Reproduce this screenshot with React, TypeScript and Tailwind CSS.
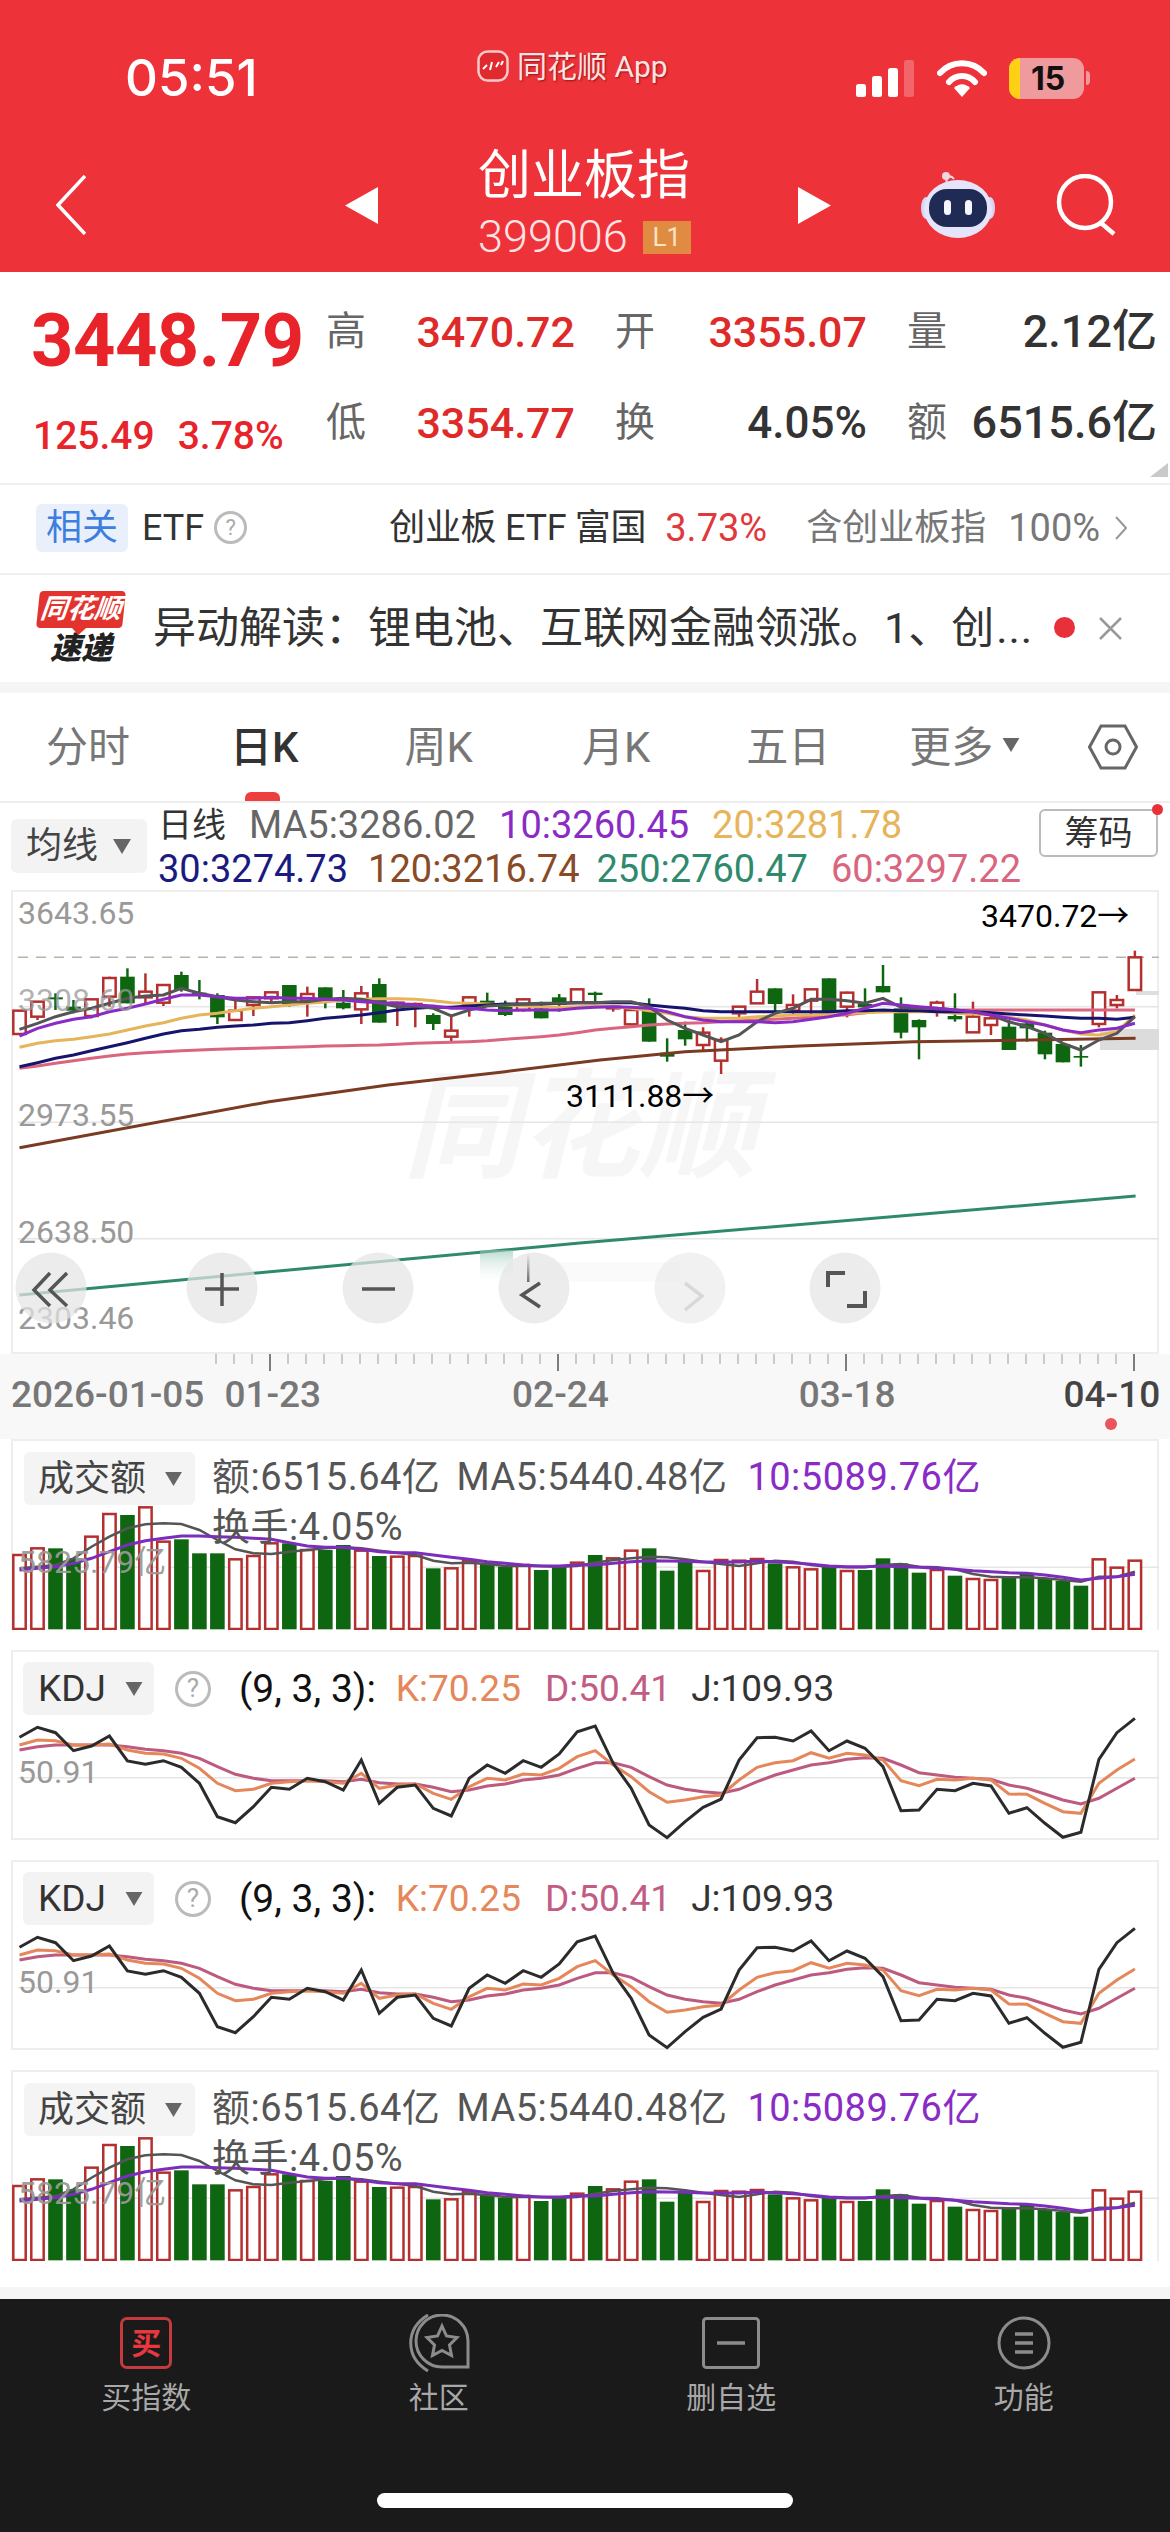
import React from 'react';

// chart data read off the screenshot: y values are in "crop" units, page y = base + v / 3
type Candle = [boolean, number, number, number, number];

const candles: Candle[] = [
  [true, 392, 392, 462, 462], [true, 365, 365, 410, 420], [false, 340, 352, 358, 390], [false, 360, 380, 392, 400],
  [true, 358, 358, 408, 415], [true, 290, 294, 350, 380], [false, 265, 290, 370, 370], [true, 280, 335, 352, 375],
  [true, 315, 315, 368, 378], [false, 275, 285, 330, 335], [false, 300, 338, 345, 358], [false, 340, 345, 412, 432],
  [true, 360, 392, 420, 420], [true, 350, 352, 375, 408], [true, 335, 337, 355, 370], [false, 315, 315, 372, 380],
  [true, 320, 342, 362, 410], [false, 322, 322, 365, 385], [false, 330, 368, 385, 388], [true, 318, 340, 388, 432],
  [false, 295, 312, 428, 428], [true, 365, 368, 372, 438], [true, 368, 372, 378, 442], [false, 400, 405, 432, 450],
  [true, 410, 452, 470, 488], [true, 348, 352, 375, 410], [false, 338, 362, 372, 375], [false, 362, 378, 405, 408],
  [true, 355, 358, 390, 395], [false, 365, 385, 415, 415], [false, 342, 352, 375, 395], [true, 325, 328, 368, 368],
  [false, 335, 338, 345, 368], [true, 375, 380, 385, 395], [true, 385, 390, 433, 437], [false, 355, 385, 485, 485],
  [false, 475, 518, 530, 545], [false, 425, 450, 478, 497], [true, 442, 458, 495, 515], [true, 472, 480, 542, 582],
  [true, 378, 380, 400, 415], [true, 297, 335, 370, 370], [false, 325, 325, 372, 402], [true, 343, 375, 392, 402],
  [true, 325, 328, 362, 402], [false, 295, 295, 395, 395], [true, 335, 338, 380, 412], [false, 325, 372, 382, 385],
  [false, 255, 318, 337, 337], [false, 352, 385, 458, 475], [false, 418, 420, 442, 538], [true, 362, 368, 385, 410],
  [false, 340, 408, 418, 425], [true, 365, 410, 457, 457], [true, 405, 415, 435, 465], [false, 420, 440, 510, 510],
  [false, 420, 430, 445, 485], [false, 452, 458, 523, 538], [false, 490, 492, 547, 547], [false, 495, 528, 533, 560],
  [true, 335, 337, 432, 442], [true, 345, 360, 375, 385], [true, 212, 232, 330, 330],
];

const ma5 = [448, 430, 410, 395, 385, 370, 355, 348, 345, 325, 340, 350, 360, 365, 368, 365, 365, 358, 355, 358, 368, 380, 378, 385, 408, 390, 378, 375, 372, 370, 370, 368, 368, 365, 365, 380, 420, 445, 465, 485, 465, 425, 400, 385, 358, 358, 362, 370, 355, 382, 385, 385, 390, 395, 405, 425, 440, 460, 490, 510, 480, 460, 410];
const ma10 = [468, 445, 430, 418, 410, 395, 385, 372, 358, 345, 345, 350, 355, 355, 352, 355, 355, 358, 360, 365, 368, 370, 375, 378, 385, 385, 390, 392, 390, 390, 390, 385, 382, 380, 382, 385, 395, 410, 420, 425, 425, 425, 428, 425, 418, 410, 400, 385, 370, 375, 380, 385, 390, 395, 405, 415, 425, 435, 450, 458, 450, 445, 430];
const ma20 = [502, 490, 482, 478, 470, 462, 450, 438, 428, 415, 405, 400, 392, 385, 380, 375, 370, 366, 360, 358, 356, 356, 358, 362, 368, 370, 372, 375, 378, 380, 382, 380, 378, 380, 385, 392, 400, 410, 415, 415, 415, 410, 408, 405, 405, 403, 400, 398, 396, 395, 395, 395, 400, 402, 405, 412, 420, 435, 450, 462, 465, 455, 405];
const ma30 = [560, 548, 535, 525, 512, 500, 488, 475, 462, 452, 448, 442, 438, 435, 430, 428, 422, 415, 410, 405, 398, 390, 385, 382, 382, 378, 375, 372, 372, 372, 370, 368, 368, 368, 368, 375, 380, 385, 392, 395, 395, 395, 395, 395, 395, 395, 392, 392, 390, 392, 392, 395, 395, 395, 398, 402, 405, 408, 412, 415, 415, 418, 412];
const ma60 = [565, 558, 550, 542, 535, 528, 522, 518, 515, 512, 510, 508, 506, 505, 503, 502, 500, 498, 497, 496, 495, 493, 490, 488, 487, 485, 482, 478, 474, 470, 465, 458, 450, 445, 440, 435, 432, 430, 428, 425, 422, 420, 418, 415, 412, 408, 404, 398, 392, 392, 392, 390, 390, 390, 390, 390, 390, 390, 390, 390, 390, 390, 390];

const volBars: [boolean, number][] = [
  [true, 375], [true, 355], [false, 355], [false, 385], [true, 320], [true, 252], [false, 255], [true, 232], [true, 335], [false, 328], [false, 370],
  [false, 370], [true, 388], [true, 378], [true, 340], [false, 340], [true, 360], [false, 360], [false, 345], [true, 362], [false, 378], [true, 380],
  [true, 378], [false, 415], [true, 415], [true, 392], [false, 400], [false, 410], [true, 405], [false, 420], [false, 405], [true, 398], [false, 375],
  [true, 385], [true, 362], [false, 355], [false, 422], [false, 395], [true, 423], [true, 390], [true, 392], [true, 387], [false, 400], [true, 412],
  [true, 418], [false, 410], [true, 423], [false, 420], [false, 385], [false, 400], [false, 428], [true, 420], [false, 437], [true, 447], [true, 450],
  [false, 440], [false, 430], [false, 445], [false, 453], [false, 467], [true, 388], [true, 413], [true, 392],
];
const volMa5 = [415, 410, 405, 385, 350, 320, 295, 283, 280, 282, 300, 330, 358, 370, 372, 365, 360, 355, 352, 355, 362, 368, 375, 392, 400, 398, 402, 408, 408, 408, 410, 408, 398, 390, 385, 380, 382, 388, 395, 402, 408, 400, 392, 395, 405, 410, 412, 412, 405, 402, 410, 412, 418, 432, 440, 442, 442, 445, 450, 455, 440, 440, 425];
const volMa10 = [420, 415, 410, 400, 385, 365, 345, 332, 325, 318, 318, 320, 322, 325, 328, 338, 348, 352, 352, 358, 365, 368, 368, 375, 382, 388, 395, 400, 405, 408, 408, 405, 405, 400, 395, 392, 393, 394, 396, 396, 396, 393, 395, 398, 403, 408, 410, 410, 408, 410, 412, 415, 418, 422, 425, 428, 430, 435, 442, 450, 445, 440, 433];

const kdjJ = [922, 892, 908, 962, 948, 918, 993, 1003, 992, 1012, 1060, 1160, 1178, 1130, 1072, 1078, 1045, 1055, 1080, 990, 1120, 1072, 1065, 1135, 1158, 1045, 1005, 1030, 992, 1012, 972, 905, 888, 1000, 1075, 1185, 1223, 1175, 1132, 1107, 990, 923, 922, 933, 903, 962, 933, 955, 1010, 1142, 1140, 1078, 1082, 1060, 1068, 1150, 1133, 1180, 1222, 1207, 988, 908, 865];
const kdjK = [945, 930, 932, 945, 945, 942, 960, 970, 972, 985, 1015, 1060, 1082, 1078, 1060, 1055, 1052, 1055, 1060, 1030, 1075, 1065, 1062, 1090, 1108, 1070, 1045, 1050, 1032, 1035, 1015, 980, 962, 1005, 1040, 1085, 1117, 1110, 1100, 1095, 1050, 1012, 998, 992, 968, 985, 970, 975, 990, 1052, 1067, 1048, 1050, 1045, 1050, 1092, 1093, 1120, 1145, 1150, 1060, 1020, 987];
const kdjD = [960, 950, 945, 945, 945, 945, 950, 958, 962, 970, 985, 1010, 1033, 1045, 1052, 1052, 1052, 1052, 1055, 1048, 1058, 1062, 1062, 1072, 1085, 1080, 1068, 1062, 1050, 1045, 1035, 1015, 998, 998, 1012, 1040, 1065, 1078, 1085, 1090, 1078, 1055, 1035, 1020, 1005, 998, 988, 983, 985, 1005, 1028, 1035, 1042, 1045, 1048, 1065, 1075, 1092, 1110, 1122, 1105, 1075, 1045];

const xAt = (i: number) => 19.5 + i * 17.99;

function linePoints(values: number[], base: number) {
  return values.map((v, i) => `${xAt(i).toFixed(1)},${(base + v / 3).toFixed(1)}`).join(' ');
}

const RED_LINE = '#b3302f';
const GREEN_BAR = '#0f6610';

function MainChart() {
  const y = (v: number) => 880 + v / 3;
  return (
    <svg viewBox="11 890 1148 464" className="absolute -left-[2px] -top-[2px] w-[1148px] h-[464px]">
      <defs>
        <linearGradient id="smudge" x1="0" y1="0" x2="0" y2="1">
          <stop offset="0" stopColor="#8fc4b2" stopOpacity="0.6" />
          <stop offset="1" stopColor="#ffffff" stopOpacity="0" />
        </linearGradient>
        <linearGradient id="ghostLine" x1="0" y1="0" x2="0" y2="1">
          <stop offset="0" stopColor="#555555" stopOpacity="0" />
          <stop offset="1" stopColor="#555555" stopOpacity="0.85" />
        </linearGradient>
      </defs>
      <text x="403" y="1168" fontSize="118" fontWeight="700" fontStyle="italic" fill="#f6f6f6">同花顺</text>
      <line x1="18" x2="1159" y1={y(232)} y2={y(232)} stroke="#b5b5a8" strokeWidth="1.5" strokeDasharray="10 8" />
      {[380, 727, 1076].map((v) => (
        <line key={v} x1="18" x2="1159" y1={y(v)} y2={y(v)} stroke="#e6e6e6" strokeWidth="1.5" />
      ))}
      <rect x="1100" y="1029" width="59" height="21" fill="#dcdcdc" />
      <rect x="1136" y="991" width="23" height="4" fill="#dedede" />
      {candles.map(([up, hi, top, bottom, lo], i) => (
        <g key={i}>
          <line x1={xAt(i)} x2={xAt(i)} y1={y(hi)} y2={y(lo)} stroke={up ? RED_LINE : GREEN_BAR} strokeWidth="2.5" />
          {up ? (
            <rect x={xAt(i) - 6.2} y={y(top)} width="12.4" height={(bottom - top) / 3} fill="#fff" stroke={RED_LINE} strokeWidth="2.5" />
          ) : (
            <rect x={xAt(i) - 7.3} y={y(top)} width="14.6" height={(bottom - top) / 3} fill={GREEN_BAR} />
          )}
        </g>
      ))}
      <polyline points={`19.5,${y(803)} 269,${y(665)} 388,${y(615)} 505,${y(575)} 600,${y(540)} 685,${y(515)} 800,${y(498)} 914,${y(485)} 1029,${y(480)} 1135.6,${y(475)}`} fill="none" stroke="#7b3a22" strokeWidth="3" />
      <polyline points={`19.5,${y(1245)} 577,${y(1090)} 1135.6,${y(948)}`} fill="none" stroke="#2f8a6d" strokeWidth="3" />
      <polyline points={linePoints(ma60, 880)} fill="none" stroke="#d9657e" strokeWidth="3" />
      <polyline points={linePoints(ma20, 880)} fill="none" stroke="#e6b45a" strokeWidth="3" />
      <polyline points={linePoints(ma30, 880)} fill="none" stroke="#16146c" strokeWidth="3" />
      <polyline points={linePoints(ma5, 880)} fill="none" stroke="#555555" strokeWidth="3" />
      <polyline points={linePoints(ma10, 880)} fill="none" stroke="#8a2bc6" strokeWidth="3" />

      <g fontSize="32" fill="#999999">
        <text x="18" y="924">3643.65</text>
        <text x="18" y="1011" fillOpacity="0.75">3308.60</text>
        <text x="18" y="1126">2973.55</text>
        <text x="18" y="1243">2638.50</text>
        <text x="18" y="1329">2303.46</text>
      </g>
      <g fontSize="32" fill="#000000">
        <text x="981" y="927">3470.72→</text>
        <text x="566" y="1107">3111.88→</text>
      </g>

      {/* floating zoom / pan buttons */}
      <rect x="480" y="1250" width="33" height="36" fill="url(#smudge)" />
      <rect x="520" y="1262" width="160" height="20" fill="#fafafa" />
      {[51, 222, 378, 534, 690, 845].map((cx) => (
        <circle key={cx} cx={cx} cy="1288" r="35.5" fill="#e4e4e4" fillOpacity={cx === 690 ? 0.5 : 0.72} />
      ))}
      <rect x="527" y="1254" width="2.5" height="28" fill="url(#ghostLine)" />
      <g fill="none" stroke="#555555" strokeWidth="3.5">
        <path d="M50 1273 L34 1290 L50 1306 M67 1273 L50 1290 L67 1306" />
        <path d="M205 1289 H239 M222 1273 V1306" />
        <path d="M362 1289 H395" />
        <path d="M540 1283 L522 1295 L540 1307" />
        <path d="M828 1287 V1273 H845 M865 1291 V1306 H847" strokeWidth="4" />
      </g>
      <path d="M685 1283 L702 1296 L685 1310" fill="none" stroke="#d8d8d8" strokeWidth="3.5" />
    </svg>
  );
}

function AxisTicks() {
  const ticks = Array.from({ length: 52 }, (_, i) => 216 + i * 18);
  return (
    <svg width="1170" height="18" className="block">
      {ticks.map((x) => {
        const major = x === 270 || x === 558 || x === 846 || x === 1134;
        return <line key={x} x1={x} x2={x} y1="0" y2={major ? 17 : 10} stroke={major ? '#555555' : '#bbbbbb'} strokeWidth="1.5" />;
      })}
    </svg>
  );
}

function VolumeChart({ top }: { top: number }) {
  const base = top - 9;
  const y = (v: number) => base + v / 3;
  return (
    <svg viewBox={`11 ${top} 1148 191`} className="absolute -left-[2px] -top-[2px] w-[1148px] h-[191px]">
      <line x1="18" x2="1159" y1={y(412)} y2={y(412)} stroke="#e6e6e6" strokeWidth="1.5" />
      {volBars.map(([up, t], i) =>
        up ? (
          <rect key={i} x={xAt(i) - 6.2} y={y(t)} width="12.4" height={(597 - t) / 3} fill="#fff" stroke={RED_LINE} strokeWidth="2.5" />
        ) : (
          <rect key={i} x={xAt(i) - 7.3} y={y(t)} width="14.6" height={(598 - t) / 3} fill={GREEN_BAR} />
        ),
      )}
      <polyline points={linePoints(volMa5, base)} fill="none" stroke="#555555" strokeWidth="2.5" />
      <polyline points={linePoints(volMa10, base)} fill="none" stroke="#7c2dbb" strokeWidth="3" />
      <text x="18" y={y(430)} fontSize="32" fill="#999999" fillOpacity="0.95">5825.79亿</text>
    </svg>
  );
}

function KdjChart({ top }: { top: number }) {
  const base = top - 220;
  const y = (v: number) => base + v / 3;
  return (
    <svg viewBox={`11 ${top} 1148 190`} className="absolute -left-[2px] -top-[2px] w-[1148px] h-[190px]">
      <line x1="18" x2="1159" y1={y(1043)} y2={y(1043)} stroke="#e6e6e6" strokeWidth="1.5" />
      <text x="18" y={y(1058)} fontSize="32" fill="#999999">50.91</text>
      <polyline points={linePoints(kdjD, base)} fill="none" stroke="#bd5a80" strokeWidth="3" />
      <polyline points={linePoints(kdjK, base)} fill="none" stroke="#e5875a" strokeWidth="3" />
      <polyline points={linePoints(kdjJ, base)} fill="none" stroke="#2b2b2b" strokeWidth="3" />
    </svg>
  );
}

function Caret({ className }: { className: string }) {
  return (
    <svg viewBox="0 0 18 16" className={className}>
      <path d="M0 1 H18 L9 16 Z" fill="#666666" />
    </svg>
  );
}

function HelpCircle({ className }: { className: string }) {
  return (
    <div className={`rounded-full border-[3px] border-[#bbbbbb] text-[#aaaaaa] flex items-center justify-center ${className}`}>?</div>
  );
}

function VolumePanel({ top }: { top: number }) {
  return (
    <div className="relative h-[191px] border-2 border-b-0 border-[#eeeeee]">
      <VolumeChart top={top} />
      <div className="relative flex items-start pt-[11px] pl-[11px]">
        <div className="flex items-center w-[171px] h-[53px] rounded-md bg-[#f3f3f3]/95 pl-[14px] text-[36px] text-[#444444]">
          成交额
          <Caret className="w-[17px] h-[15px] ml-[19px]" />
        </div>
        <div className="ml-[17px] text-[38px] leading-[50px] text-[#555555] tracking-[0.5px]">
          <div className="flex whitespace-nowrap">
            <span>额:6515.64亿</span>
            <span className="ml-[16px]">MA5:5440.48亿</span>
            <span className="ml-[20px] text-[#8a2bc6]">10:5089.76亿</span>
          </div>
          <div>换手:4.05%</div>
        </div>
      </div>
    </div>
  );
}

function KdjPanel({ top }: { top: number }) {
  return (
    <div className="relative h-[190px] border-2 border-[#eeeeee]">
      <KdjChart top={top} />
      <div className="relative flex items-center pt-[10px] pl-[10px]">
        <div className="flex items-center w-[131px] h-[53px] rounded-md bg-[#f3f3f3] pl-[15px] text-[37px] text-[#333333]">
          KDJ
          <Caret className="w-[18px] h-[15px] ml-[19px]" />
        </div>
        <HelpCircle className="w-[36px] h-[36px] ml-[21px] text-[26px]" />
        <div className="flex ml-[28px] text-[37px] leading-[50px] whitespace-nowrap">
          <span className="text-[#111111] text-[39px]">(9, 3, 3):</span>
          <span className="ml-[20px] text-[#e5875a]">K:70.25</span>
          <span className="ml-[24px] text-[#c25c85]">D:50.41</span>
          <span className="ml-[20px] text-[#333333]">J:109.93</span>
        </div>
      </div>
    </div>
  );
}

function QuoteCell({ label, value, valueClass }: { label: string; value: string; valueClass: string }) {
  return (
    <div className="flex items-center justify-between h-[44px]">
      <span className="text-[40px] text-[#666666]">{label}</span>
      <span className={`font-medium ${valueClass}`}>{value}</span>
    </div>
  );
}

function App() {
  return (
    <div className="relative w-[1170px] h-[2532px] flex flex-col overflow-hidden bg-white [font-family:Roboto,'Noto_Sans_CJK_SC',sans-serif]">
      <header className="h-[272px] bg-[#ee3239] text-white">
        <div className="flex items-center h-[130px] pt-[26px]">
          <span className="ml-[125px] w-[130px] text-[51px] font-medium [font-family:Inter,sans-serif] whitespace-nowrap">05:51</span>
          <div className="flex items-center ml-[222px] w-[192px] -mt-[24px]">
            <svg width="32" height="32" viewBox="0 0 32 32">
              <rect x="1.5" y="1.5" width="29" height="29" rx="9" fill="#e02a2f" stroke="#f8c9c9" strokeWidth="2.5" />
              <path d="M6 19 L10 15 M13 20 L15 12 M19 17 L22 12 M24 15 L26 11" stroke="#ffffff" strokeWidth="2" />
            </svg>
            <span className="ml-[8px] text-[30px] text-[#fbe4e4] whitespace-nowrap [text-shadow:1px_1px_2px_rgba(90,0,0,0.6)]">同花顺 App</span>
          </div>
          <svg width="58" height="37" viewBox="0 0 58 37" className="ml-[187px]">
            <rect x="0" y="24" width="10" height="13" rx="2.5" fill="#fff" />
            <rect x="16" y="16" width="10" height="21" rx="2.5" fill="#fff" />
            <rect x="32" y="8" width="10" height="29" rx="2.5" fill="#fff" />
            <rect x="48" y="0" width="10" height="37" rx="2.5" fill="#ffffff" fillOpacity="0.25" />
          </svg>
          <svg width="50" height="38" viewBox="0 0 50 38" className="ml-[23px]">
            <path d="M3 14 C15 1 35 1 47 14" fill="none" stroke="#fff" strokeWidth="6" strokeLinecap="round" />
            <path d="M12 23 C19 15 31 15 38 23" fill="none" stroke="#fff" strokeWidth="6" strokeLinecap="round" />
            <path d="M17 29 C22 24 28 24 33 29 L25 38 Z" fill="#fff" />
          </svg>
          <div className="flex items-center ml-[22px]">
            <div className="relative flex w-[75px] h-[41px] rounded-[11px] overflow-hidden bg-[#ef9a9c]">
              <div className="w-[11px] bg-[#fdd015]" />
              <span className="flex-1 text-center text-[32px] leading-[41px] font-bold text-[#111111] [font-family:Inter,sans-serif] pr-[8px]">15</span>
            </div>
            <div className="ml-[2px] w-[4px] h-[14px] rounded-r-full bg-[#ef9a9c]" />
          </div>
        </div>
        <div className="flex items-center h-[142px] pt-[8px]">
          <svg width="30" height="60" viewBox="0 0 30 60" className="ml-[56px]">
            <path d="M29 1 L2 30 L29 59" fill="none" stroke="#fff" strokeWidth="3.5" />
          </svg>
          <svg width="33" height="37" viewBox="0 0 33 37" className="ml-[259px]">
            <path d="M33 0 V37 L0 18.5 Z" fill="#fff" />
          </svg>
          <div className="ml-[100px] w-[220px] flex flex-col items-start -mt-[10px]">
            <span className="text-[53px] leading-[60px] whitespace-nowrap">创业板指</span>
            <div className="flex items-center mt-[14px]">
              <span className="text-[45px] leading-[34px] font-light text-[#fde3e3]">399006</span>
              <span className="ml-[15px] w-[48px] h-[33px] flex items-center justify-center bg-[#e08b42] text-[26px] text-[#fbe3c8]">L1</span>
            </div>
          </div>
          <svg width="33" height="37" viewBox="0 0 33 37" className="ml-[100px]">
            <path d="M0 0 V37 L33 18.5 Z" fill="#fff" />
          </svg>
          <svg width="76" height="68" viewBox="0 0 76 68" className="ml-[89px]">
            <path d="M27 12 C25 6 30 3 34 8" fill="none" stroke="#f2dfea" strokeWidth="2" />
            <circle cx="26" cy="5" r="4" fill="#f3d5df" />
            <ellipse cx="6" cy="37" rx="5" ry="11" fill="#d8d6f4" />
            <ellipse cx="70" cy="37" rx="5" ry="11" fill="#d8d6f4" />
            <ellipse cx="38" cy="38" rx="34" ry="29" fill="#e6e4fb" />
            <rect x="9" y="18" width="58" height="38" rx="18" fill="#1f2b55" />
            <rect x="24" y="29" width="7" height="15" rx="3.5" fill="#f6f6ff" />
            <rect x="45" y="29" width="7" height="15" rx="3.5" fill="#f6f6ff" />
          </svg>
          <svg width="62" height="62" viewBox="0 0 62 62" className="ml-[60px]">
            <circle cx="29" cy="28" r="26" fill="none" stroke="#fff" strokeWidth="4.5" />
            <path d="M45 49 L58 60" fill="none" stroke="#fff" strokeWidth="4.5" />
          </svg>
        </div>
      </header>

      <section className="relative h-[213px] border-b-2 border-[#f0f0f0] flex pl-[34px]">
        <div className="w-[292px] flex flex-col text-[#e8232a]">
          <span className="text-[74px] leading-[74px] font-bold mt-[32px] -ml-[3px] tracking-[-0.5px]">3448.79</span>
          <div className="flex text-[39px] leading-[40px] font-medium mt-[38px] -ml-[1px] whitespace-nowrap">
            <span>125.49</span>
            <span className="ml-[23px]">3.78%</span>
          </div>
        </div>
        <div className="grid grid-cols-[249px_252px_250px] gap-x-[40px] gap-y-[47px] h-fit pt-[38px]">
          <QuoteCell label="高" value="3470.72" valueClass="text-[43px] text-[#df2a2a]" />
          <QuoteCell label="开" value="3355.07" valueClass="text-[43px] text-[#df2a2a]" />
          <QuoteCell label="量" value="2.12亿" valueClass="text-[45px] text-[#333333]" />
          <QuoteCell label="低" value="3354.77" valueClass="text-[43px] text-[#df2a2a]" />
          <QuoteCell label="换" value="4.05%" valueClass="text-[44px] text-[#333333]" />
          <QuoteCell label="额" value="6515.6亿" valueClass="text-[45px] text-[#333333]" />
        </div>
        <svg width="18" height="14" viewBox="0 0 18 14" className="absolute right-[2px] bottom-[6px]">
          <path d="M18 0 V14 H0 Z" fill="#c9c9c9" />
        </svg>
      </section>

      <section className="h-[90px] border-b-2 border-[#f0f0f0] flex items-start pt-[19px] pl-[36px] text-[36px] whitespace-nowrap">
        <span className="w-[92px] h-[48px] rounded-md bg-[#eaf0fb] text-[#3d7fe0] flex items-center justify-center">相关</span>
        <span className="ml-[14px] leading-[48px] text-[#333333]">ETF</span>
        <HelpCircle className="w-[33px] h-[33px] ml-[10px] mt-[7px] text-[22px]" />
        <span className="ml-[142px] leading-[48px] text-[#333333] tracking-[-0.3px]">创业板 ETF 富国</span>
        <span className="ml-[19px] leading-[48px] text-[38px] text-[#e0383c]">3.73%</span>
        <span className="ml-[39px] leading-[48px] text-[#777777]">含创业板指</span>
        <span className="ml-[22px] leading-[48px] text-[38px] text-[#777777]">100%</span>
        <svg width="12" height="24" viewBox="0 0 12 24" className="ml-[15px] mt-[12px]">
          <path d="M1 1 L11 12 L1 23" fill="none" stroke="#999999" strokeWidth="2" />
        </svg>
      </section>

      <section className="h-[107px] flex items-start pl-[37px] pt-[16px] whitespace-nowrap">
        <div className="w-[88px] flex flex-col items-center">
          <div className="relative w-[86px] h-[37px] rounded-[4px] bg-[#e2332f] -skew-x-6 flex items-center justify-center text-[27px] leading-[37px] font-bold italic text-white">
            同花顺
            <div className="absolute left-[38px] -bottom-[5px] w-[10px] h-[10px] rotate-45 bg-[#e2332f]" />
          </div>
          <span className="mt-[6px] text-[31px] leading-[30px] font-black italic text-[#222222]">速递</span>
        </div>
        <span className="ml-[28px] mt-[15px] text-[43px] leading-[44px] text-[#333333]">{'异动解读\uFF1A锂电池、互联网金融领涨。1、创'}<span className="ml-[2px] tracking-[1px]">...</span></span>
        <div className="absolute left-[1054px] top-[617px] w-[21px] h-[21px] rounded-full bg-[#e8303a]" />
        <svg width="23" height="23" viewBox="0 0 23 23" className="absolute left-[1099px] top-[617px]">
          <path d="M1 1 L22 22 M22 1 L1 22" stroke="#999999" strokeWidth="2.5" />
        </svg>
      </section>

      <div className="h-[11px] bg-[#f5f5f5]" />

      <nav className="relative h-[110px] border-b-2 border-[#eeeeee] flex items-center text-[42px] text-[#777777] whitespace-nowrap">
        <span className="ml-[46px]">分时</span>
        <span className="ml-[100px] text-[#333333] font-medium">日K</span>
        <span className="ml-[106px]">周K</span>
        <span className="ml-[109px]">月K</span>
        <span className="ml-[96px]">五日</span>
        <span className="ml-[79px]">更多</span>
        <Caret className="w-[18px] h-[15px] ml-[9px] -mt-[6px]" />
        <svg width="50" height="46" viewBox="0 0 50 46" className="ml-[68px]">
          <path d="M1.5 23 L13 2 H37 L48.5 23 L37 44 H13 Z" fill="none" stroke="#666666" strokeWidth="3" />
          <circle cx="25" cy="23" r="7" fill="none" stroke="#666666" strokeWidth="3" />
        </svg>
        <div className="absolute left-[245px] bottom-0 w-[35px] h-[9px] rounded-t-md bg-[#ee3f3f]" />
      </nav>

      <section className="relative h-[87px] flex whitespace-nowrap">
        <div className="ml-[11px] mt-[16px] w-[136px] h-[54px] rounded-md bg-[#f3f3f3] flex items-center pl-[15px] text-[36px] text-[#444444]">
          均线
          <Caret className="w-[18px] h-[16px] ml-[15px]" />
        </div>
        <div className="ml-[11px] w-[871px] text-[38px] leading-[44px]">
          <div className="flex gap-[23px]">
            <span className="text-[#333333] text-[34px]">日线</span>
            <span className="text-[#666666]">MA5:3286.02</span>
            <span className="text-[#8a2bc6]">10:3260.45</span>
            <span className="text-[#e6b45a]">20:3281.78</span>
          </div>
          <div className="flex">
            <span className="text-[#1a1a80]">30:3274.73</span>
            <span className="ml-[20px] text-[#8a4a25]">120:3216.74</span>
            <span className="ml-[17px] text-[#2f8a6d]">250:2760.47</span>
            <span className="ml-[23px] text-[#d9657e]">60:3297.22</span>
          </div>
        </div>
        <div className="relative ml-[10px] mt-[6px] w-[119px] h-[48px] rounded-md border-2 border-[#bbbbbb] flex items-center justify-center text-[34px] text-[#333333]">
          筹码
          <div className="absolute -right-[7px] -top-[7px] w-[11px] h-[11px] rounded-full bg-[#e8303a]" />
        </div>
      </section>

      <div className="relative mx-[11px] w-[1148px] h-[464px] border-2 border-[#eeeeee]">
        <MainChart />
      </div>

      <div className="h-[85px] bg-[#f8f8f8] text-[37px] font-medium text-[#777777] whitespace-nowrap">
        <AxisTicks />
        <div className="flex h-[46px] leading-[46px] pl-[11px]">
          <span>2026-01-05</span>
          <span className="ml-[20px]">01-23</span>
          <span className="ml-[191px]">02-24</span>
          <span className="ml-[190px]">03-18</span>
          <span className="ml-[168px] text-[#444444]">04-10</span>
        </div>
        <div className="ml-[1105px] w-[12px] h-[12px] rounded-full bg-[#e8555c]" />
      </div>

      <div className="flex flex-col gap-[20px] px-[11px]">
        <VolumePanel top={1439} />
        <KdjPanel top={1650} />
        <KdjPanel top={1860} />
        <VolumePanel top={2070} />
      </div>

      <div className="mt-[26px] h-[12px] bg-[#f5f5f5]" />

      <footer className="flex-1 bg-[#1a1a1a] text-[30px] text-[#a8a8a8]">
        <div className="grid grid-cols-4 pt-[18px]">
          <div className="flex flex-col items-center">
            <div className="w-[52px] h-[52px] rounded-[7px] border-[3px] border-[#c43b3d] flex items-center justify-center text-[30px] font-bold text-[#e5383f]">买</div>
            <span className="mt-[12px] leading-[34px]">买指数</span>
          </div>
          <div className="flex flex-col items-center">
            <svg width="62" height="58" viewBox="0 0 62 58" className="-mt-[3px] mb-[-3px]">
              <path d="M60 53 V27 A26 26 0 1 0 34 53 Z" fill="none" stroke="#8c8c8c" strokeWidth="3" />
              <path d="M20 1 C-3 15 -3 43 20 57" fill="none" stroke="#8c8c8c" strokeWidth="3" />
              <path d="M34 12 L38.5 22 L49 23.5 L41.5 31 L43.5 41.5 L34 36.5 L24.5 41.5 L26.5 31 L19 23.5 L29.5 22 Z" fill="none" stroke="#8c8c8c" strokeWidth="3" />
            </svg>
            <span className="mt-[12px] leading-[34px]">社区</span>
          </div>
          <div className="flex flex-col items-center">
            <svg width="58" height="52" viewBox="0 0 58 52">
              <rect x="1.5" y="1.5" width="55" height="49" rx="3" fill="none" stroke="#8c8c8c" strokeWidth="3" />
              <path d="M15 26 H43" stroke="#8c8c8c" strokeWidth="3.5" />
            </svg>
            <span className="mt-[12px] leading-[34px]">删自选</span>
          </div>
          <div className="flex flex-col items-center">
            <svg width="54" height="54" viewBox="0 0 54 54" className="-mt-[1px] -mb-[1px]">
              <circle cx="27" cy="27" r="25" fill="none" stroke="#8c8c8c" strokeWidth="3" />
              <path d="M18 18 H36 M18 27 H36 M18 36 H36" stroke="#8c8c8c" strokeWidth="3.5" />
            </svg>
            <span className="mt-[12px] leading-[34px]">功能</span>
          </div>
        </div>
        <div className="mx-auto mt-[78px] w-[416px] h-[15px] rounded-full bg-white" />
      </footer>
    </div>
  );
}

export default App;
